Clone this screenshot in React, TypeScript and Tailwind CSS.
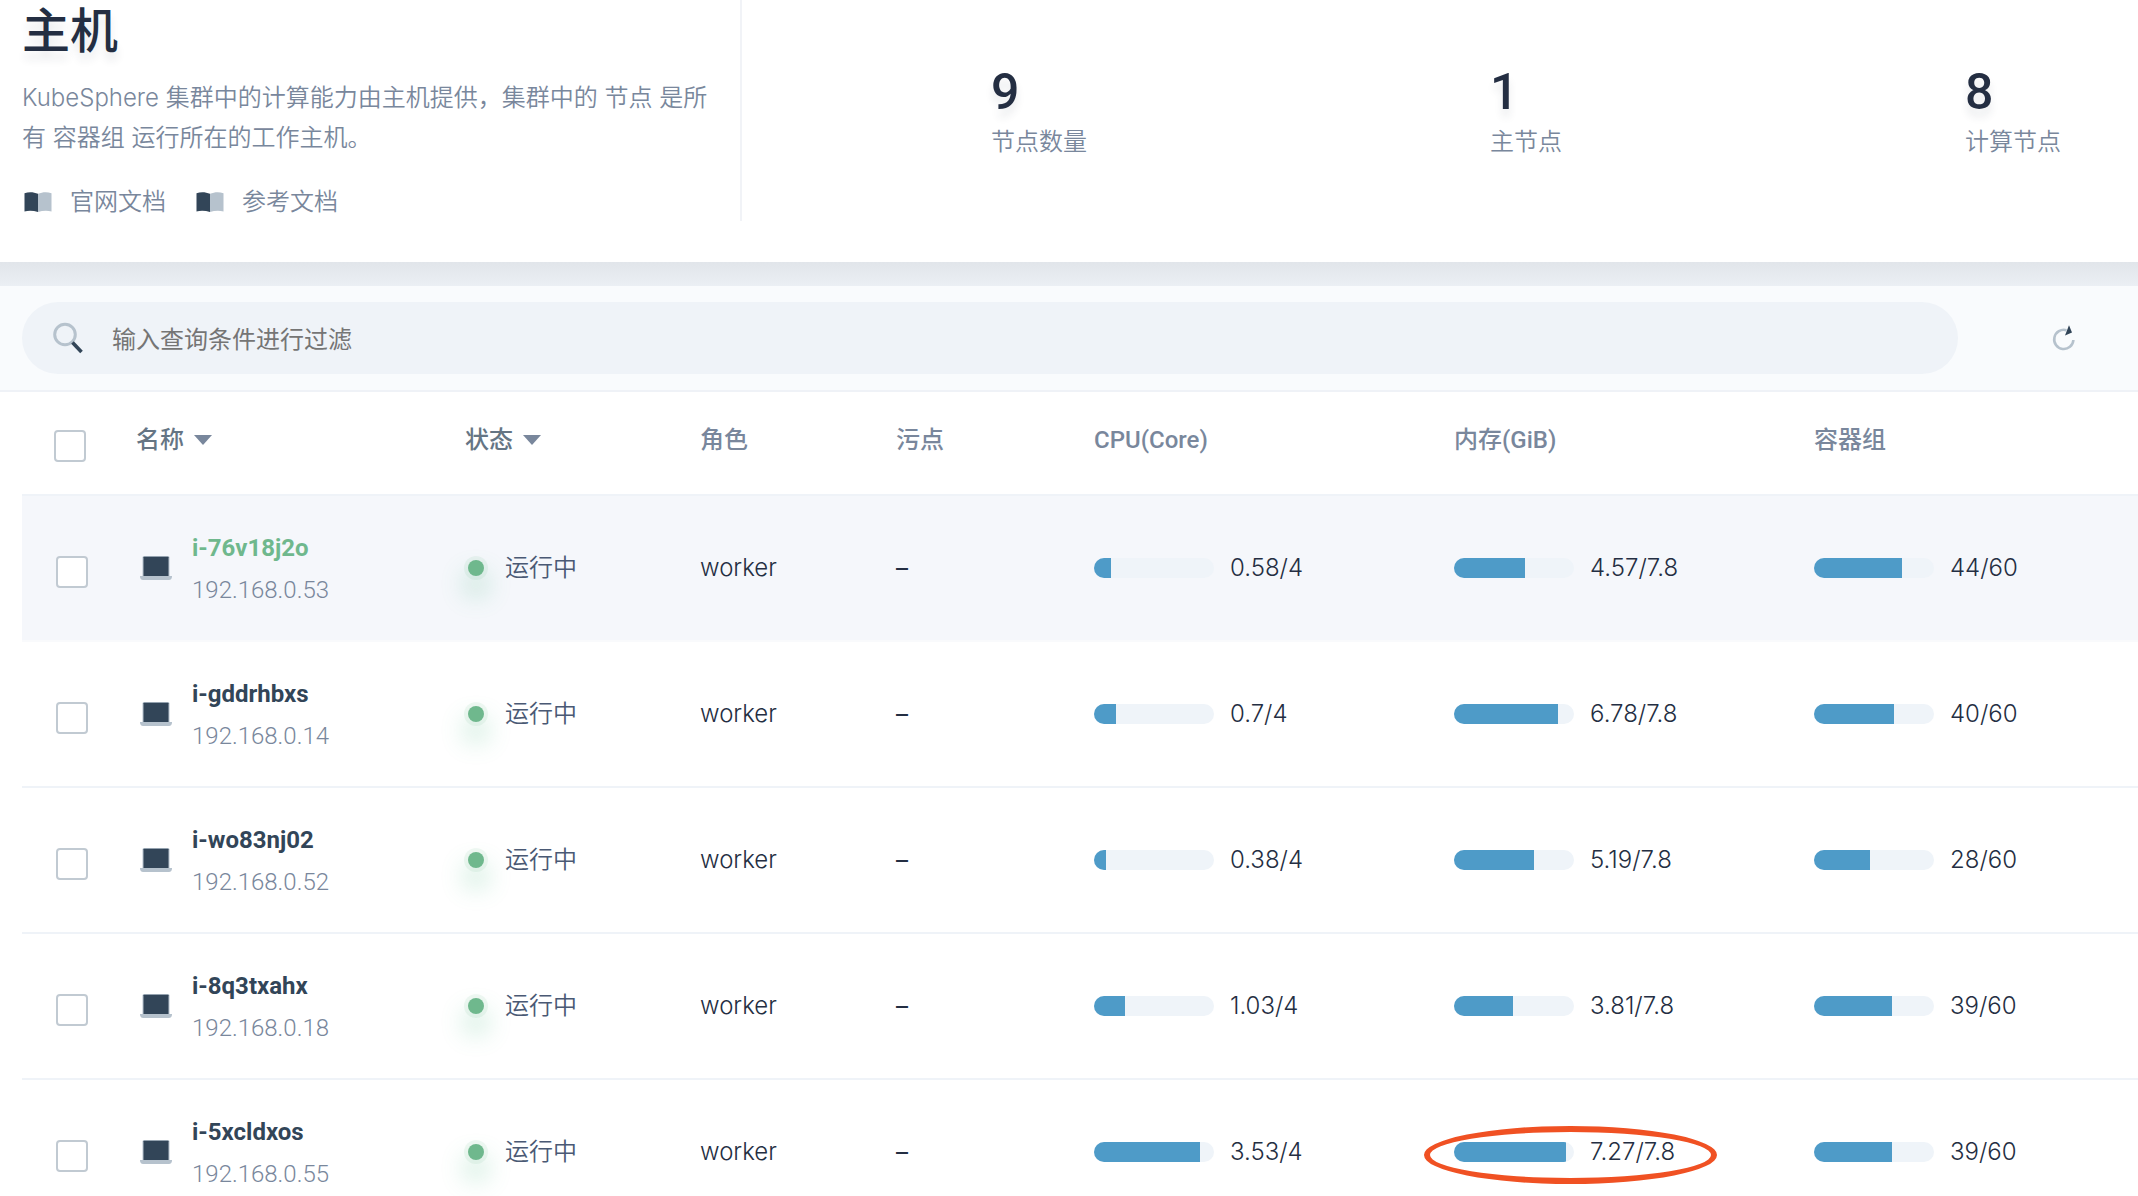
import React from "react";

type Host = {
  name: string;
  ip: string;
  cpu: [number, number];
  memory: [number, number];
  pods: [number, number];
  active?: boolean;
  marked?: boolean;
};

const hosts: Host[] = [
  { name: "i-76v18j2o", ip: "192.168.0.53", cpu: [0.58, 4], memory: [4.57, 7.8], pods: [44, 60], active: true },
  { name: "i-gddrhbxs", ip: "192.168.0.14", cpu: [0.7, 4], memory: [6.78, 7.8], pods: [40, 60] },
  { name: "i-wo83nj02", ip: "192.168.0.52", cpu: [0.38, 4], memory: [5.19, 7.8], pods: [28, 60] },
  { name: "i-8q3txahx", ip: "192.168.0.18", cpu: [1.03, 4], memory: [3.81, 7.8], pods: [39, 60] },
  { name: "i-5xcldxos", ip: "192.168.0.55", cpu: [3.53, 4], memory: [7.27, 7.8], pods: [39, 60], marked: true },
];

const stats = [
  { value: 9, label: "节点数量" },
  { value: 1, label: "主节点" },
  { value: 8, label: "计算节点" },
];

function BookIcon() {
  return (
    <svg className="h-5 w-7" viewBox="0 0 28 20" aria-hidden="true">
      <path d="M0.500 1.200C4.500 -0.200 9.500 -0.200 14 1.800V20C9.500 18.600 4.500 18.600 0.500 19.400Z" fill="#324558" />
      <path d="M27.500 1.200C23.500 -0.200 18.500 -0.200 14 1.800V20C18.500 18.600 23.500 18.600 27.500 19.400Z" fill="#b6c2cd" />
    </svg>
  );
}

function SearchIcon() {
  return (
    <svg className="h-8 w-8" viewBox="0 0 32 32" aria-hidden="true">
      <circle cx="13" cy="12.500" r="10.300" fill="none" stroke="#b6c2cd" strokeWidth="3" />
      <path d="M20.500 20.500L29.500 30" stroke="#324558" strokeWidth="3.600" />
    </svg>
  );
}

function RefreshIcon() {
  return (
    <svg className="h-8 w-8" viewBox="0 0 32 32" aria-hidden="true">
      <path d="M18.500 8.200A9.600 9.600 0 1 0 25.400 18" fill="none" stroke="#b6c2cd" strokeWidth="2.600" />
      <path d="M21 3.200L24 10.400L17 13.600Z" fill="#324558" />
    </svg>
  );
}

function LaptopIcon() {
  return (
    <svg className="h-6 w-8 shrink-0" viewBox="0 0 32 24" aria-hidden="true">
      <rect x="2.500" y="0" width="27" height="22" rx="1.500" fill="#b6c2cd" />
      <rect x="3.500" y="0.800" width="25" height="19.500" rx="0.500" fill="#324558" />
      <path d="M0 20H32V21Q31.500 24 29 24H3Q0.500 24 0 21Z" fill="#b6c2cd" />
    </svg>
  );
}

function SortButton({ children }: { children: string }) {
  return (
    <button type="button" className="flex items-center gap-2.5 font-medium text-[#657584]">
      {children}
      <svg className="h-2.5 w-[18px]" viewBox="0 0 18 10" aria-hidden="true">
        <path d="M0 0H18L9 10Z" fill="#79879c" />
      </svg>
    </button>
  );
}

function Checkbox({ label }: { label: string }) {
  return (
    <input
      type="checkbox"
      aria-label={label}
      className="block h-8 w-8 appearance-none rounded-[4px] border-2 border-[#c1cad2] bg-white checked:bg-[#324558]"
    />
  );
}

function Usage({ value, marked }: { value: [number, number]; marked?: boolean }) {
  const [used, total] = value;
  return (
    <div className="relative flex items-center gap-4 text-[#242e42]">
      <div className="h-5 w-[120px] overflow-hidden rounded-full bg-[#eff4f9]">
        <div className="h-full bg-[#4e9bc8]" style={{ width: `${Math.round((used / total) * 100)}%` }} />
      </div>
      <span className="font-['Inter',sans-serif] font-[350]">
        {used}/{total}
      </span>
      {marked && (
        <div className="absolute -top-2.5 -left-[30px] h-[58px] w-[293px] rounded-[50%] border-6 border-[#f05123]" />
      )}
    </div>
  );
}

export default function App() {
  return (
    <main className="h-screen overflow-hidden bg-white font-['Roboto','Noto_Sans_CJK_SC',sans-serif] text-2xl leading-8 text-[#79879c]">
      <header className="flex h-[262px] items-start">
        <div className="h-[221px] w-[742px] shrink-0 border-r-2 border-[#f1f3f7] pl-[22px]">
          <h1 className="text-5xl leading-[64px] font-medium text-[#242e42] [text-shadow:0_8px_8px_rgba(36,46,66,0.1)]">主机</h1>
          <p className="mt-3.5 mr-5 font-['Inter','Noto_Sans_CJK_SC',sans-serif] leading-10 font-[350]">
            KubeSphere 集群中的计算能力由主机提供，集群中的 节点 是所有 容器组 运行所在的工作主机。
          </p>
          <nav className="mt-7 flex gap-[30px] pl-0.5 font-[350]">
            <a href="#docs" className="flex items-center gap-[18px]">
              <BookIcon />
              官网文档
            </a>
            <a href="#reference" className="flex items-center gap-[18px]">
              <BookIcon />
              参考文档
            </a>
          </nav>
        </div>
        <dl className="flex flex-1 justify-between pt-[60px] pr-[77px] pl-[249px]">
          {stats.map((s) => (
            <div key={s.label} className="flex flex-col-reverse gap-0.5">
              <dt className="font-[350]">{s.label}</dt>
              <dd className="text-[50px] leading-[64px] font-medium text-[#242e42] [text-shadow:0_8px_8px_rgba(36,46,66,0.1)]">
                {s.value}
              </dd>
            </div>
          ))}
        </dl>
      </header>

      <div className="h-6 bg-linear-to-b from-[#e1e5ea] to-[#ebeff4]" />

      <section className="flex items-center border-b-2 border-[#eff2f7] bg-[#f9fbfd] py-4 pr-[52px] pl-[22px]">
        <label className="flex h-[72px] flex-1 items-center gap-7 rounded-full bg-[#eff3f8] pl-[30px]">
          <SearchIcon />
          <input
            type="text"
            aria-label="输入查询条件进行过滤"
            placeholder="输入查询条件进行过滤"
            className="h-full flex-1 bg-transparent pt-1 outline-none placeholder:text-[#757575]"
          />
        </label>
        <button type="button" aria-label="刷新" className="ml-[84px] flex h-11 w-11 items-center justify-center">
          <RefreshIcon />
        </button>
      </section>

      <div className="pl-[22px]">
        <table className="w-full table-fixed border-separate border-spacing-0 text-left">
          <colgroup>
            <col className="w-[114px]" />
            <col className="w-[329px]" />
            <col className="w-[235px]" />
            <col className="w-[196px]" />
            <col className="w-[198px]" />
            <col className="w-[360px]" />
            <col className="w-[360px]" />
            <col />
          </colgroup>
          <thead>
            <tr className="h-[104px] align-top *:border-b-2 *:border-[#eff3f8] *:pt-8 *:font-medium">
              <th className="pl-8">
                <div className="pt-1.5">
                  <Checkbox label="全选" />
                </div>
              </th>
              <th>
                <SortButton>名称</SortButton>
              </th>
              <th>
                <SortButton>状态</SortButton>
              </th>
              <th>角色</th>
              <th>污点</th>
              <th>CPU(Core)</th>
              <th>内存(GiB)</th>
              <th>容器组</th>
            </tr>
          </thead>
          <tbody>
            {hosts.map((h) => (
              <tr
                key={h.name}
                className={
                  h.active
                    ? "h-[146px] bg-[#f5f7fb] *:border-b-2 *:border-[#f9fafc]"
                    : "h-[146px] *:border-b-2 *:border-[#eff3f8]"
                }
              >
                <td className="pl-[34px]">
                  <div className="pt-2">
                    <Checkbox label={h.name} />
                  </div>
                </td>
                <td>
                  <div className="flex items-center gap-5 pl-1">
                    <LaptopIcon />
                    <div className="pt-0.5 leading-[42px]">
                      <a href={`#${h.name}`} className={h.active ? "font-bold text-[#6fb88d]" : "font-bold text-[#324558]"}>
                        {h.name}
                      </a>
                      <div className="font-[350]">{h.ip}</div>
                    </div>
                  </div>
                </td>
                <td>
                  <div className="flex items-center gap-[18px] text-[#4a5974]">
                    <span className="m-[3px] h-4 w-4 rounded-full bg-[#6fb88d] shadow-[0_0_0_4px_rgba(111,184,141,0.1),0_16px_24px_4px_rgba(85,188,138,0.3)]" />
                    <span className="font-[350]">运行中</span>
                  </div>
                </td>
                <td className="font-['Inter',sans-serif] font-[350] text-[#242e42]">worker</td>
                <td className="font-['Inter',sans-serif] text-[#242e42]">–</td>
                <td>
                  <Usage value={h.cpu} />
                </td>
                <td>
                  <Usage value={h.memory} marked={h.marked} />
                </td>
                <td>
                  <Usage value={h.pods} />
                </td>
              </tr>
            ))}
          </tbody>
        </table>
      </div>
    </main>
  );
}
